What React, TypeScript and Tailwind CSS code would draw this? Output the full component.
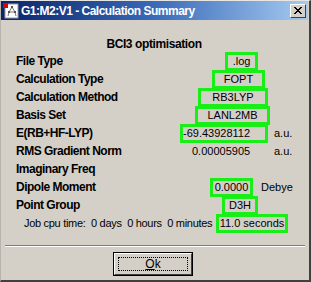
import React from "react";

const font = { fontFamily: '"Liberation Sans", Arial, sans-serif' };

function Box({ children, w, ml, align = "center" }: { children: React.ReactNode; w: string; ml: string; align?: string }) {
  return (
    <div
      className={`h-[19px] border-[3px] border-[#19ee19] flex items-center shrink-0 whitespace-nowrap ${w} ${ml} ${
        align === "left" ? "justify-start pl-0" : "justify-center"
      }`}
    >
      <span className="leading-none">{children}</span>
    </div>
  );
}

function Row({ label, children }: { label?: string; children?: React.ReactNode }) {
  return (
    <div className="flex items-center h-[18px]">
      <div className="w-[178px] shrink-0 pl-[15px] font-bold text-[12px] tracking-[-0.5px] text-black whitespace-nowrap">
        {label}
      </div>
      {children}
    </div>
  );
}

function TitleIcon() {
  return (
    <svg width="16" height="16" viewBox="0 0 16 16">
      <rect x="2" y="1" width="13" height="14" fill="#fff" stroke="#9a9a9a" />
      <line x1="9" y1="4" x2="6" y2="9" stroke="#777" />
      <line x1="9" y1="4" x2="12" y2="9" stroke="#777" />
      <line x1="6" y1="9" x2="5" y2="13" stroke="#777" />
      <line x1="12" y1="9" x2="13" y2="13" stroke="#777" />
      <line x1="6" y1="9" x2="12" y2="9" stroke="#777" />
      <rect x="8" y="3" width="2" height="2" fill="#555" />
      <rect x="5" y="8" width="2" height="2" fill="#555" />
      <rect x="11" y="8" width="2" height="2" fill="#555" />
      <rect x="0" y="0" width="5" height="5" fill="#e00000" />
    </svg>
  );
}

export default function App() {
  return (
    <div
      style={font}
      className="w-[311px] h-[282px] bg-[#d4d0c8] border-l border-t border-l-[#b8b4ac] border-t-[#e8e6e0] border-r-2 border-b-2 border-r-[#404040] border-b-[#404040] flex flex-col text-black overflow-hidden"
    >
      {/* title bar */}
      <div className="h-[19px] mr-[1px] flex items-center bg-gradient-to-r from-[#0a246a] via-[#3a6ab8] to-[#a6caf0]">
        <div className="ml-[2px] mt-[1px]">
          <TitleIcon />
        </div>
        <span className="ml-[2px] text-white font-bold text-[12px] tracking-[-0.5px] whitespace-nowrap">
          G1:M2:V1 - Calculation Summary
        </span>
        <div className="ml-auto mr-[2px] w-[16px] h-[14px] bg-[#d4d0c8] border border-t-white border-l-white border-r-[#404040] border-b-[#404040] flex items-center justify-center">
          <svg width="8" height="7" viewBox="0 0 8 7">
            <path d="M0 0 L7 7 M1 0 L8 7 M7 0 L0 7 M8 0 L1 7" stroke="#000" strokeWidth="1" />
          </svg>
        </div>
      </div>

      {/* body */}
      <div className="pt-[16px] text-[11px]">
        <div className="h-[16px] flex items-center justify-center pr-[2px] font-bold text-[12px] tracking-[-0.4px]">
          BCI3 optimisation
        </div>
        <Row label="File Type">
          <Box w="w-[33px]" ml="ml-[46px]">.log</Box>
        </Row>
        <Row label="Calculation Type">
          <Box w="w-[53px]" ml="ml-[33px]">FOPT</Box>
        </Row>
        <Row label="Calculation Method">
          <Box w="w-[70px]" ml="ml-[19px]">RB3LYP</Box>
        </Row>
        <Row label="Basis Set">
          <Box w="w-[75px]" ml="ml-[16px]">LANL2MB</Box>
        </Row>
        <Row label="E(RB+HF-LYP)">
          <Box w="w-[88px]" ml="ml-[1px]" align="left">-69.43928112</Box>
          <span className="ml-[6px]">a.u.</span>
        </Row>
        <Row label="RMS Gradient Norm">
          <span className="ml-[13px] w-[82px] shrink-0">0.00005905</span>
          <span>a.u.</span>
        </Row>
        <Row label="Imaginary Freq" />
        <Row label="Dipole Moment">
          <Box w="w-[43px]" ml="ml-[31px]">0.0000</Box>
          <span className="ml-[8px]">Debye</span>
        </Row>
        <Row label="Point Group">
          <Box w="w-[36px]" ml="ml-[43px]">D3H</Box>
        </Row>
        <div className="flex items-center h-[18px] whitespace-nowrap">
          <span className="pl-[23px] w-[215px] shrink-0 whitespace-pre tracking-[-0.3px]">
            Job cpu time:  0 days  0 hours  0 minutes
          </span>
          <Box w="w-[72px]" ml="ml-[0px]">11.0 seconds</Box>
        </div>

        {/* separator */}
        <div className="mt-[13px] mx-[4px] border-t border-t-[#808080] border-b border-b-white" />

        <div className="flex justify-center mt-[5px] pr-[4px]">
          <button className="w-[80px] h-[24px] border border-black bg-[#d4d0c8] p-0">
            <div className="w-full h-full border border-t-white border-l-white border-r-[#404040] border-b-[#404040] p-[3px]">
              <div className="w-full h-full border border-dotted border-black flex items-center justify-center text-[12px]">
                <span>
                  <span className="underline">O</span>k
                </span>
              </div>
            </div>
          </button>
        </div>
      </div>
    </div>
  );
}
